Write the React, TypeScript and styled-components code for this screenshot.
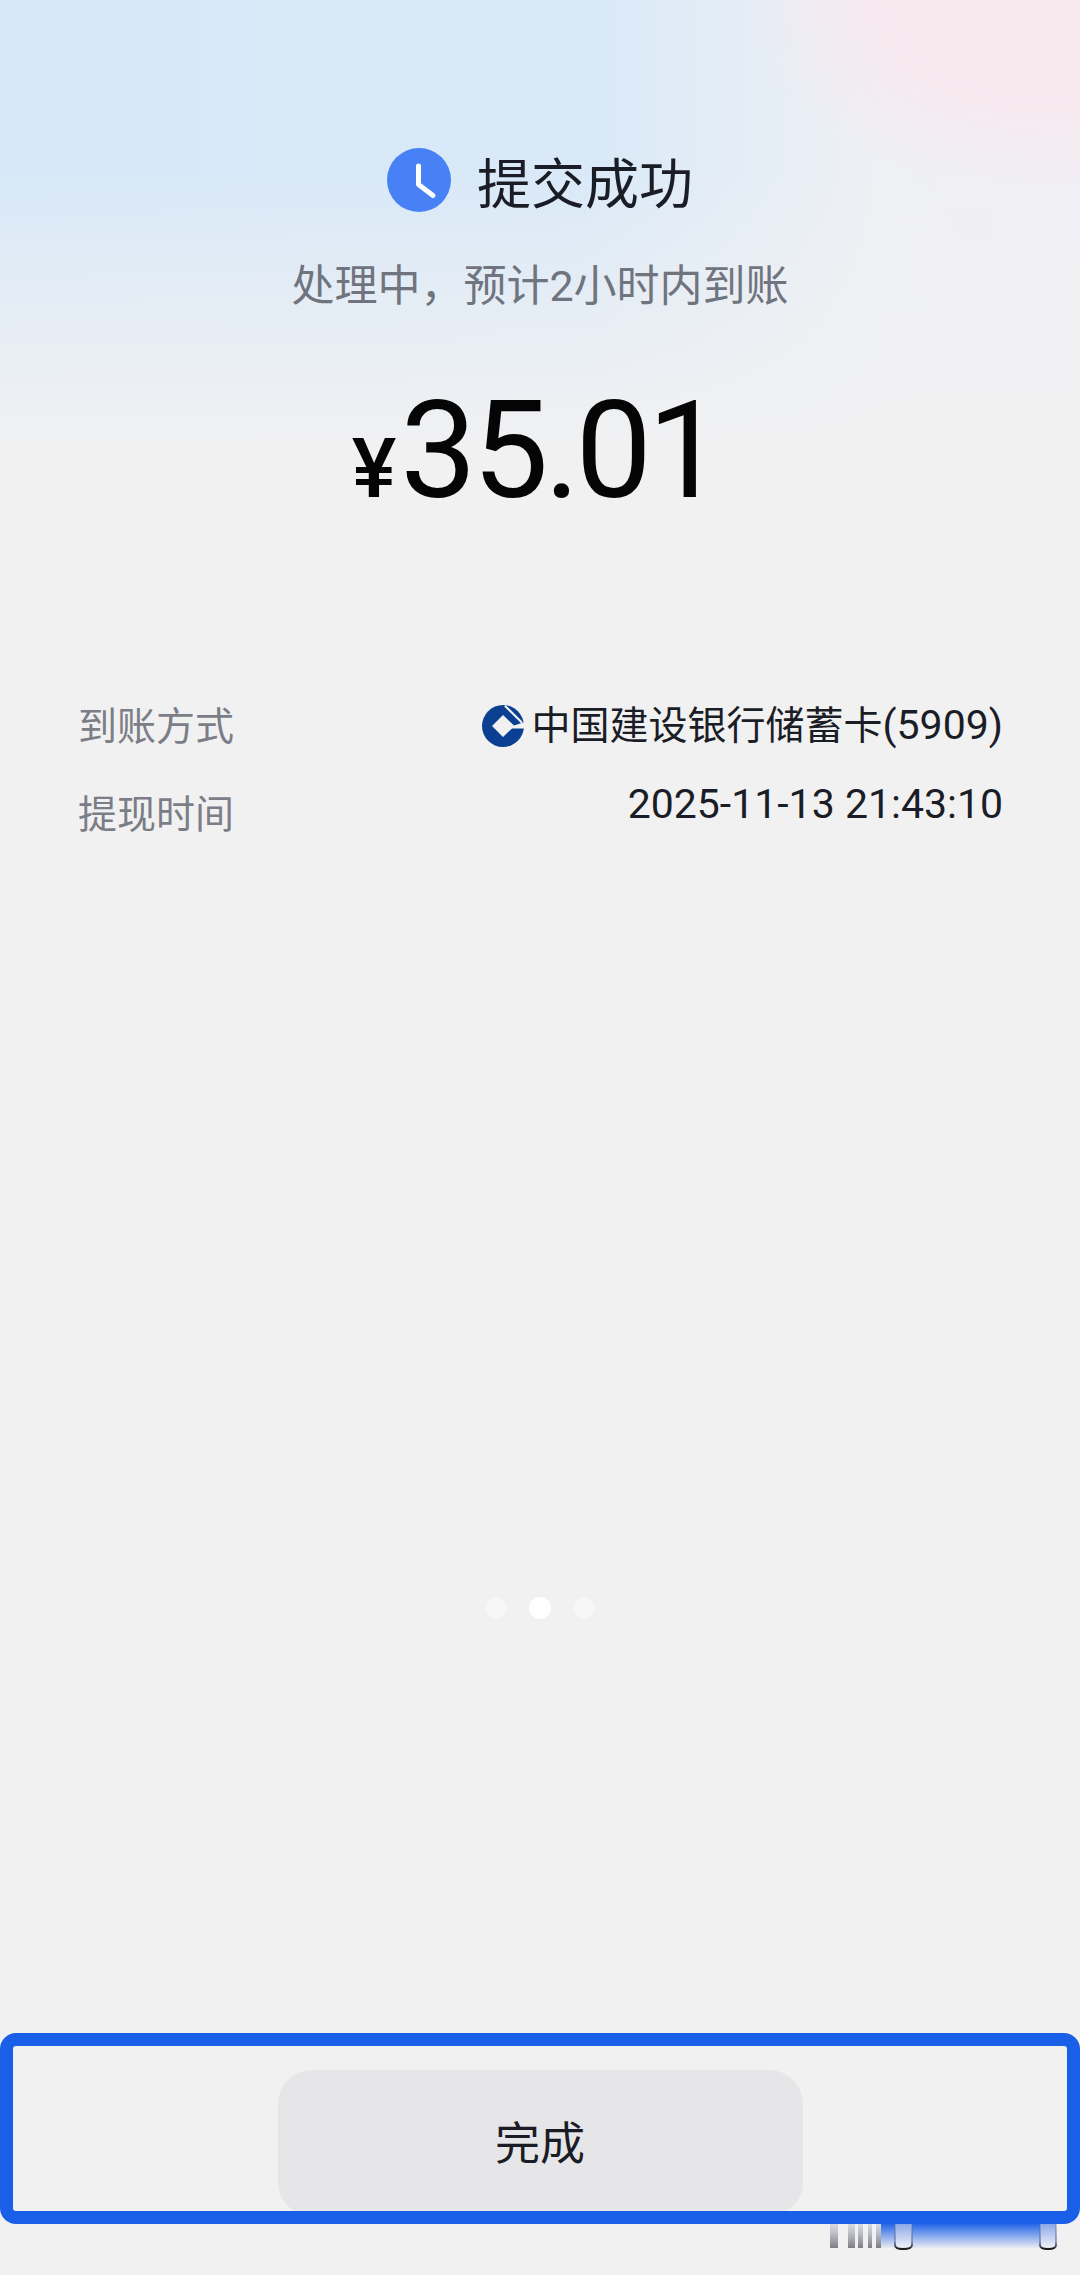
import React from 'react';
import styled, { createGlobalStyle } from 'styled-components';

const GlobalStyle = createGlobalStyle`
  html, body {
    margin: 0;
    padding: 0;
    background: #f1f1f2;
  }
  * {
    box-sizing: border-box;
  }
`;

const Page = styled.div`
  position: relative;
  display: flex;
  flex-direction: column;
  width: 1080px;
  height: 2275px;
  overflow: hidden;
  font-family: Roboto, 'Noto Sans CJK SC', sans-serif;
  background:
    radial-gradient(ellipse 300px 190px at 1040px 0, rgba(247, 232, 238, 0.95) 50%, rgba(247, 232, 238, 0) 100%),
    linear-gradient(to bottom, rgba(241, 241, 242, 0) 0, rgba(241, 241, 242, 0) 170px, rgba(241, 241, 242, 0.5) 300px, #f1f1f2 450px),
    linear-gradient(to right, #d7e8f8 0, #d9e9f8 580px, #e4edf6 740px, #eef0f4 880px, #f1eff4 1080px);
`;

const TitleRow = styled.div`
  display: flex;
  align-items: center;
  justify-content: center;
  gap: 26px;
  height: 64px;
  margin-top: 148px;
`;

const Title = styled.div`
  padding-top: 11px;
  font-size: 54px;
  line-height: 64px;
  color: #1a1d26;
`;

const Subtitle = styled.div`
  margin-top: 46px;
  font-size: 43px;
  line-height: 56px;
  text-align: center;
  color: #6f747e;
`;

const Amount = styled.div`
  display: flex;
  align-items: baseline;
  justify-content: center;
  margin-top: 52px;
  padding-right: 9px;
  line-height: 170px;
  color: #050505;
`;

const Currency = styled.span`
  font-size: 84px;
  font-weight: 500;
  margin-right: 4px;
`;

const Digits = styled.span`
  font-size: 136px;
  letter-spacing: -4.5px;
`;

const InfoList = styled.div`
  display: flex;
  flex-direction: column;
  gap: 25px;
  margin-top: 144px;
  padding: 0 77px 0 78px;
`;

const InfoRow = styled.div<{ $tall?: boolean }>`
  display: flex;
  justify-content: space-between;
  align-items: flex-start;
  height: ${(p) => (p.$tall ? '60px' : '54px')};
`;

const Label = styled.div<{ $drop: number }>`
  font-size: 39px;
  line-height: 54px;
  margin-top: ${(p) => p.$drop}px;
  color: #7b7e86;
`;

const Value = styled.div`
  display: flex;
  align-items: center;
  gap: 8px;
  font-size: 39px;
  line-height: 54px;
  color: #1b1d26;
`;

const Numeric = styled.span`
  font-size: 41px;
`;

const Dots = styled.div`
  display: flex;
  justify-content: center;
  gap: 22px;
  margin-top: 760px;
`;

const Dot = styled.span<{ $active?: boolean }>`
  width: 22px;
  height: 22px;
  border-radius: 50%;
  background: ${(p) => (p.$active ? '#ffffff' : '#f6f6f7')};
`;

const FooterWrap = styled.div`
  position: relative;
  margin-top: auto;
  margin-bottom: 51px;
`;

const Frame = styled.div`
  display: flex;
  justify-content: center;
  height: 191px;
  padding-top: 24px;
  border: 13px solid #1a5fe8;
  border-radius: 16px;
  overflow: hidden;
`;

const DoneButton = styled.div`
  display: flex;
  align-items: center;
  justify-content: center;
  flex: none;
  width: 525px;
  height: 146px;
  border-radius: 34px;
  background: #e6e6e8;
  font-size: 45px;
  color: #1b1d26;
  padding-bottom: 6px;
`;

const Smear = styled.svg`
  position: absolute;
  left: 830px;
  top: 191px;
`;

const ClockIcon = () => (
  <svg width="64" height="64" viewBox="0 0 64 64">
    <circle cx="32" cy="32" r="32" fill="#4880f6" />
    <path d="M31.5 18v18.5L46 47.5" fill="none" stroke="#fff" strokeWidth="5" strokeLinecap="round" strokeLinejoin="round" />
  </svg>
);

const BankLogo = () => (
  <svg width="42" height="44" viewBox="0 0 44 44">
    <circle cx="22" cy="22" r="22" fill="#0b3f91" />
    <path d="M22 10.5L33.5 21.5 44.5 18V24.5H31.5L22 33.5 10.5 22z" fill="#f1f1f2" />
    <path d="M24 0.8L42 18.5" fill="none" stroke="#f1f1f2" strokeWidth="2.2" />
  </svg>
);

const stripes = [
  { x: 0, w: 8 },
  { x: 18, w: 7 },
  { x: 28, w: 5 },
  { x: 38, w: 4 },
  { x: 46, w: 5 },
];

const BottomSmear = () => (
  <Smear width="227" height="28" viewBox="0 0 227 28">
    <defs>
      <linearGradient id="blueFade" x1="0" y1="0" x2="0" y2="1">
        <stop offset="0" stopColor="#1a5fe8" stopOpacity="0.95" />
        <stop offset="1" stopColor="#1a5fe8" stopOpacity="0.04" />
      </linearGradient>
      <linearGradient id="grayFade" x1="0" y1="0" x2="0" y2="1">
        <stop offset="0" stopColor="#8a93b0" stopOpacity="0.25" />
        <stop offset="1" stopColor="#55555c" stopOpacity="0.75" />
      </linearGradient>
      <linearGradient id="tubeEdge" x1="0" y1="0" x2="0" y2="1">
        <stop offset="0" stopColor="#5b6a99" stopOpacity="0.3" />
        <stop offset="0.7" stopColor="#5b6a99" stopOpacity="0.6" />
        <stop offset="1" stopColor="#111116" />
      </linearGradient>
      <linearGradient id="tubeFill" x1="0" y1="0" x2="0" y2="1">
        <stop offset="0" stopColor="#8da8e8" />
        <stop offset="1" stopColor="#f4f5f8" />
      </linearGradient>
    </defs>
    <rect x="51" y="0" width="170" height="24" fill="url(#blueFade)" />
    {stripes.map((s) => (
      <rect key={s.x} x={s.x} y="0" width={s.w} height="24" fill="url(#grayFade)" />
    ))}
    <path d="M65 0V21Q65 25 73 25Q82 25 82 21V0" fill="url(#tubeFill)" stroke="url(#tubeEdge)" strokeWidth="2" />
    <path d="M210 0V21Q210 25 218 25Q226 25 226 21V0" fill="url(#tubeFill)" stroke="url(#tubeEdge)" strokeWidth="2" />
  </Smear>
);

export default function App() {
  return (
    <>
      <GlobalStyle />
      <Page>
        <TitleRow>
          <ClockIcon />
          <Title>提交成功</Title>
        </TitleRow>
        <Subtitle>处理中，预计2小时内到账</Subtitle>
        <Amount>
          <Currency>¥</Currency>
          <Digits>35.01</Digits>
        </Amount>
        <InfoList>
          <InfoRow>
            <Label $drop={2}>到账方式</Label>
            <Value>
              <BankLogo />
              <span>
                中国建设银行储蓄卡<Numeric>(5909)</Numeric>
              </span>
            </Value>
          </InfoRow>
          <InfoRow $tall>
            <Label $drop={11}>提现时间</Label>
            <Value>
              <Numeric>2025-11-13 21:43:10</Numeric>
            </Value>
          </InfoRow>
        </InfoList>
        <Dots>
          <Dot />
          <Dot $active />
          <Dot />
        </Dots>
        <FooterWrap>
          <Frame>
            <DoneButton>完成</DoneButton>
          </Frame>
          <BottomSmear />
        </FooterWrap>
      </Page>
    </>
  );
}
